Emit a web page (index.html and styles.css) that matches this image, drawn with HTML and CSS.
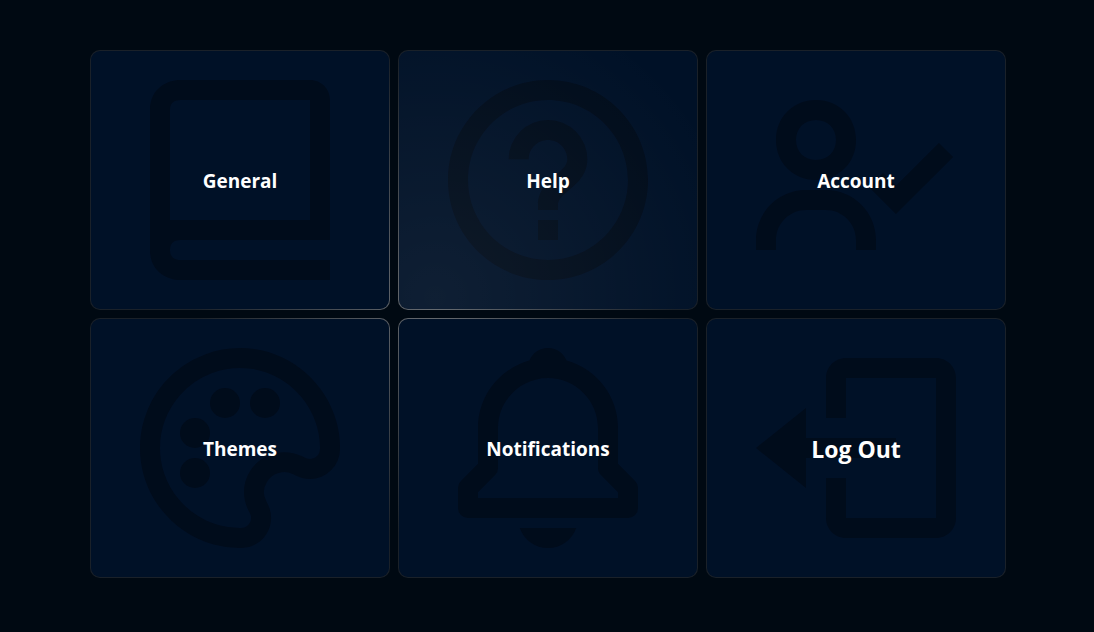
FILE: index.html
```html
<!DOCTYPE html>
<html lang="en">
<head>
<meta charset="utf-8">
<meta name="viewport" content="width=device-width, initial-scale=1">
<title>Settings</title>
<link rel="stylesheet" href="styles.css">
</head>
<body>
<main class="cards">
  <button type="button" class="card card-general">
    <span class="card-content">
      <svg class="card-icon" viewBox="0 0 24 24" aria-hidden="true"><path d="M6 22h15v-2H6.012C5.55 19.988 5 19.805 5 19s.55-.988 1.012-1H21V4c0-1.103-.897-2-2-2H6c-1.206 0-3 .799-3 3v14c0 2.201 1.794 3 3 3zM5 8V5c0-.805.55-.988 1-1h13v12H5V8z"/></svg>
      <span class="card-title">General</span>
    </span>
  </button>
  <button type="button" class="card card-help">
    <span class="card-content">
      <svg class="card-icon" viewBox="0 0 24 24" aria-hidden="true"><path d="M12 6a3.939 3.939 0 0 0-3.934 3.934h2C10.066 8.867 10.934 8 12 8s1.934.867 1.934 1.934c0 .598-.481 1.032-1.216 1.626a9.208 9.208 0 0 0-.691.599c-.998.997-1.027 2.056-1.027 2.174V15h2l-.001-.633c.001-.016.033-.386.441-.793.15-.15.339-.3.535-.458.779-.631 1.958-1.584 1.958-3.182A3.937 3.937 0 0 0 12 6zm-1 10h2v2h-2z"/><path d="M12 2C6.486 2 2 6.486 2 12s4.486 10 10 10 10-4.486 10-10S17.514 2 12 2zm0 18c-4.411 0-8-3.589-8-8s3.589-8 8-8 8 3.589 8 8-3.589 8-8 8z"/></svg>
      <span class="card-title">Help</span>
    </span>
  </button>
  <button type="button" class="card card-account">
    <span class="card-content">
      <svg class="card-icon" viewBox="0 0 24 24" aria-hidden="true"><path d="M8 12c2.28 0 4-1.72 4-4s-1.72-4-4-4-4 1.72-4 4 1.72 4 4 4zm0-6c1.178 0 2 .822 2 2s-.822 2-2 2-2-.822-2-2 .822-2 2-2zm1 7H7c-2.757 0-5 2.243-5 5v1h2v-1c0-1.654 1.346-3 3-3h2c1.654 0 3 1.346 3 3v1h2v-1c0-2.757-2.243-5-5-5zm11.29-4.71L16 12.58l-1.3-1.29-1.41 1.42 2.7 2.7 5.72-5.7z"/></svg>
      <span class="card-title">Account</span>
    </span>
  </button>
  <button type="button" class="card card-themes">
    <span class="card-content">
      <svg class="card-icon" viewBox="0 0 24 24" aria-hidden="true"><path d="M13.4 2.096a10.08 10.08 0 0 0-8.937 3.331A10.054 10.054 0 0 0 2.096 13.4c.53 3.894 3.458 7.207 7.285 8.246a9.982 9.982 0 0 0 2.618.354l.142-.001a3.001 3.001 0 0 0 2.516-1.426 2.989 2.989 0 0 0 .153-2.879l-.199-.416a1.919 1.919 0 0 1 .094-1.912 2.004 2.004 0 0 1 2.576-.755l.412.197c.412.198.85.299 1.301.299A3.022 3.022 0 0 0 22 12.14a9.935 9.935 0 0 0-.353-2.76c-1.04-3.826-4.353-6.754-8.247-7.284zm5.158 10.909-.412-.197c-1.828-.878-4.07-.198-5.135 1.494-.738 1.176-.813 2.576-.204 3.842l.199.416a.983.983 0 0 1-.051.961.992.992 0 0 1-.844.479h-.112a8.061 8.061 0 0 1-2.095-.283c-3.063-.831-5.403-3.479-5.826-6.586-.321-2.355.352-4.623 1.893-6.389a8.002 8.002 0 0 1 7.16-2.664c3.107.423 5.755 2.764 6.586 5.826.198.73.293 1.474.282 2.207-.012.807-.845 1.183-1.441.894z"/><circle cx="7.5" cy="14.5" r="1.5"/><circle cx="7.5" cy="10.5" r="1.5"/><circle cx="10.5" cy="7.5" r="1.5"/><circle cx="14.5" cy="7.5" r="1.5"/></svg>
      <span class="card-title">Themes</span>
    </span>
  </button>
  <button type="button" class="card card-notifications">
    <span class="card-content">
      <svg class="card-icon" viewBox="0 0 24 24" aria-hidden="true"><path d="M19 13.586V10c0-3.217-2.185-5.927-5.145-6.742C13.562 2.52 12.846 2 12 2s-1.562.52-1.855 1.258C7.185 4.074 5 6.783 5 10v3.586l-1.707 1.707A.996.996 0 0 0 3 16v2a1 1 0 0 0 1 1h16a1 1 0 0 0 1-1v-2a.996.996 0 0 0-.293-.707L19 13.586zM19 17H5v-.586l1.707-1.707A.996.996 0 0 0 7 14v-4c0-2.757 2.243-5 5-5s5 2.243 5 5v4c0 .266.105.52.293.707L19 16.414V17zm-7 5a2.98 2.98 0 0 0 2.818-2H9.182A2.98 2.98 0 0 0 12 22z"/></svg>
      <span class="card-title">Notifications</span>
    </span>
  </button>
  <button type="button" class="card card-logout">
    <span class="card-content">
      <svg class="card-icon" viewBox="0 0 24 24" aria-hidden="true"><path d="m2 12 5 4v-3h9v-2H7V8z"/><path d="M20 3h-9c-1.103 0-2 .897-2 2v4h2V5h9v14h-9v-4H9v4c0 1.103.897 2 2 2h9c1.103 0 2-.897 2-2V5c0-1.103-.897-2-2-2z"/></svg>
      <span class="card-title card-title-large">Log Out</span>
    </span>
  </button>
</main>
</body>
</html>
```
FILE: styles.css
```css
* {
  box-sizing: border-box;
}

body {
  margin: 0;
  min-height: 100vh;
  background: #000912;
  color: #fff;
  font-family: "Segoe UI", "Open Sans", "Noto Sans", sans-serif;
}

.cards {
  display: grid;
  grid-template-columns: repeat(3, minmax(0, 1fr));
  gap: 8px;
  padding: 50px 88px 54px 90px;
}

.card {
  display: grid;
  min-height: 260px;
  padding: 1px;
  border: 0;
  border-radius: 10px;
  color: inherit;
  font: inherit;
  cursor: pointer;
  background:
    radial-gradient(circle at var(--glow-x) var(--glow-y), rgba(255, 255, 255, 0.35), transparent 240px),
    #1a2129;
}

/* Each card's view of the one shared light source. */
.card-general { --glow-x: 344px; --glow-y: 246px; }
.card-help { --glow-x: 36px; --glow-y: 246px; }
.card-account { --glow-x: -272px; --glow-y: 246px; }
.card-themes { --glow-x: 344px; --glow-y: -22px; }
.card-notifications { --glow-x: 36px; --glow-y: -22px; }
.card-logout { --glow-x: -272px; --glow-y: -22px; }

.card-content {
  display: grid;
  place-items: center;
  border-radius: 9px;
  background: #001127;
  overflow: hidden;
}

.card-help .card-content {
  position: relative;
}

.card-help .card-content::after {
  content: "";
  position: absolute;
  inset: 0;
  background: radial-gradient(circle at var(--glow-x) var(--glow-y), rgba(255, 255, 255, 0.06), transparent 320px);
  pointer-events: none;
}

.card-icon,
.card-title {
  grid-area: 1 / 1;
}

.card-icon {
  width: 240px;
  height: 240px;
  fill: #000c1b;
}

.card-title {
  z-index: 1;
  padding-top: 2px;
  font-size: 19px;
  font-weight: 700;
  line-height: 26px;
}

.card-title-large {
  font-size: 23px;
  line-height: 32px;
}
```
